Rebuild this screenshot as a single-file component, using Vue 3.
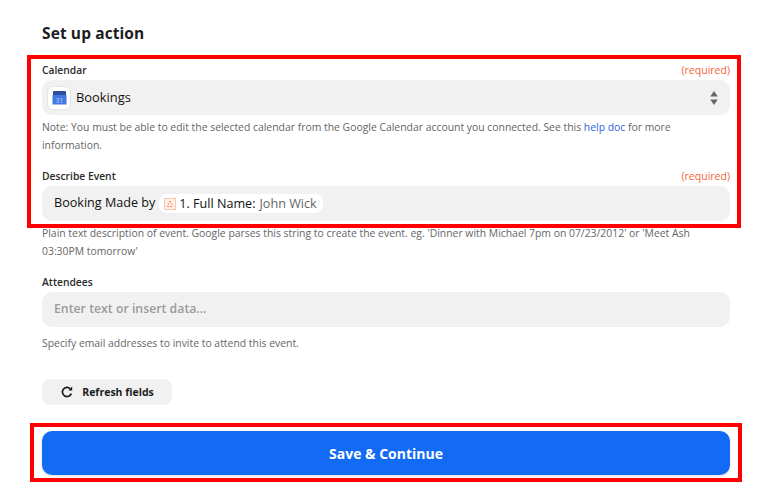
<template>
  <div class="page">
    <h2 class="title">Set up action</h2>

    <div class="field calendar">
      <div class="label-row">
        <span class="label">Calendar</span>
        <span class="required">(required)</span>
      </div>
      <div class="input select">
        <span class="app-icon">
          <svg width="15" height="15" viewBox="0 0 15 15">
            <path d="M2 1 H13 Q14 1 14 2 V5 H1 V2 Q1 1 2 1 Z" fill="#2c4f9e" />
            <rect x="0.5" y="5" width="14" height="9.5" fill="#4479e4" />
            <text x="7.5" y="12.6" font-size="7" text-anchor="middle" fill="#b9cdf5" font-family="Open Sans, sans-serif">31</text>
          </svg>
        </span>
        <span class="value">Bookings</span>
        <svg class="updown" width="10" height="16" viewBox="0 0 10 16">
          <path d="M5 1 L8.8 6.5 H1.2 Z" fill="#666" />
          <path d="M5 15 L8.8 9.5 H1.2 Z" fill="#666" />
        </svg>
      </div>
      <p class="help">
        Note: You must be able to edit the selected calendar from the Google Calendar account you connected. See this
        <a class="link">help doc</a> for more information.
      </p>
    </div>

    <div class="field describe">
      <div class="label-row">
        <span class="label">Describe Event</span>
        <span class="required">(required)</span>
      </div>
      <div class="input text">
        <span class="value">Booking Made by</span>
        <span class="pill">
          <svg width="12" height="12" viewBox="0 0 12 12">
            <rect x="0.5" y="0.5" width="11" height="11" fill="#fff1ea" stroke="#ffc4ad" />
            <path d="M6 3 L3.2 8.5 M6 3 L8.8 8.5 M3.2 8.5 H8.8" stroke="#ff7a4a" stroke-width="1" fill="none" stroke-dasharray="1.6 1.2" />
          </svg>
          <span class="pill-name">1. Full Name:</span>
          <span class="pill-val">John Wick</span>
        </span>
      </div>
      <p class="help">
        Plain text description of event. Google parses this string to create the event. eg. 'Dinner with Michael 7pm on 07/23/2012' or 'Meet Ash 03:30PM tomorrow'
      </p>
    </div>

    <div class="field attendees">
      <div class="label-row">
        <span class="label">Attendees</span>
      </div>
      <div class="input text">
        <span class="placeholder">Enter text or insert data...</span>
      </div>
      <p class="help">Specify email addresses to invite to attend this event.</p>
    </div>

    <button class="refresh">
      <svg width="14" height="14" viewBox="0 0 14 14">
        <path d="M11.3 8.6 A4.6 4.6 0 1 1 10.2 3.6" fill="none" stroke="#1b1b1b" stroke-width="1.7" />
        <path d="M8.3 5.4 H12.2 V1.5 Z" fill="#1b1b1b" />
      </svg>
      <span>Refresh fields</span>
    </button>

    <button class="save">Save &amp; Continue</button>

    <!-- annotation boxes drawn over the screenshot -->
    <div class="mark mark-top"></div>
    <div class="mark mark-bottom"></div>
  </div>
</template>

<script setup>
</script>

<style>
html,
body {
  margin: 0;
  background: #fff;
}
</style>

<style scoped>
.page {
  position: relative;
  width: 770px;
  height: 487px;
  box-sizing: border-box;
  padding: 23px 40px 0 42px;
  overflow: hidden;
  font-family: "Open Sans", "Liberation Sans", sans-serif;
  color: #1c1c1c;
  background: #fff;
}

.title {
  margin: 0 0 18px;
  font-size: 15.5px;
  line-height: 21px;
  font-weight: 700;
  letter-spacing: 0.1px;
}

.label-row {
  display: flex;
  justify-content: space-between;
  align-items: center;
  height: 16px;
  margin-bottom: 2px;
}

.label {
  font-size: 10.3px;
  font-weight: 600;
  color: #2a2a2a;
}

.required {
  font-size: 10.5px;
  color: #f4633a;
}

.input {
  display: flex;
  align-items: center;
  height: 35px;
  border-radius: 10px;
  background: #f1f1f1;
  font-size: 12.6px;
}

.select {
  padding: 0 11px 0 5px;
}

.text {
  padding: 0 12px;
}

.app-icon {
  display: flex;
  align-items: center;
  justify-content: center;
  width: 24px;
  height: 24px;
  box-sizing: border-box;
  margin-right: 5px;
  border: 1px solid #e4e4e4;
  border-radius: 6px;
  background: #fff;
}

.value {
  margin-bottom: 2px;
  font-weight: 500;
  color: #111;
}

.select .value {
  font-size: 12.9px;
}

.updown {
  margin-left: auto;
}

.help {
  margin: 3px 0 0;
  font-size: 10.4px;
  line-height: 18px;
  color: #666;
}

.attendees .help {
  margin-top: 7px;
}

.link {
  color: #2d64e0;
}

.calendar {
  margin-bottom: 14px;
}

.describe {
  margin-bottom: 14px;
}

.attendees {
  margin-bottom: 27px;
}

.pill {
  display: inline-flex;
  align-items: center;
  gap: 3px;
  height: 19px;
  margin-left: 4px;
  padding: 0 6px 0 5px;
  border-radius: 8px;
  background: #fff;
}

.pill-name {
  font-weight: 500;
  color: #111;
}

.pill-val {
  margin-left: 1px;
  color: #666;
}

.placeholder {
  margin-bottom: 2px;
  font-size: 12.3px;
  color: #9a9a9a;
  font-weight: 600;
}

.refresh {
  display: flex;
  align-items: center;
  justify-content: center;
  gap: 8px;
  width: 130px;
  height: 26px;
  padding: 0;
  border: 0;
  border-radius: 8px;
  background: #f1f1f1;
  font-family: inherit;
  font-size: 10.5px;
  font-weight: 700;
  color: #1c1c1c;
}

.save {
  display: block;
  width: 100%;
  height: 44px;
  margin-top: 26px;
  border: 0;
  border-radius: 10px;
  background: #136bf5;
  box-shadow: 0 1px 3px rgba(0, 0, 0, 0.15);
  font-family: inherit;
  font-size: 14px;
  font-weight: 700;
  color: #fff;
}

.mark {
  position: absolute;
  box-sizing: border-box;
  border: 4px solid #f00;
  pointer-events: none;
}

.mark-top {
  left: 27px;
  top: 55px;
  width: 714px;
  height: 173px;
}

.mark-bottom {
  left: 30px;
  top: 423px;
  width: 712px;
  height: 59px;
}
</style>
